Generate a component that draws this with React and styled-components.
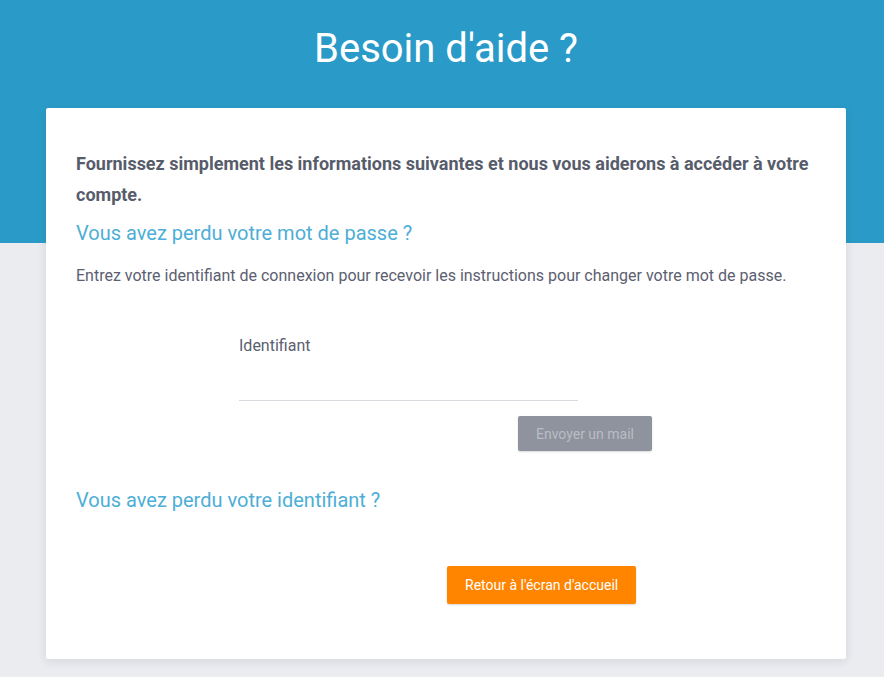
import React from "react";
import styled, { createGlobalStyle } from "styled-components";

const GlobalStyle = createGlobalStyle`
  html, body {
    margin: 0;
    padding: 0;
    background: #ebecf0;
    font-family: Roboto, "Liberation Sans", sans-serif;
  }
`;

const Page = styled.div`
  min-height: 677px;
  background: linear-gradient(to bottom, #2a9bc8 0, #2a9bc8 243px, #ebecf0 243px);
  padding: 0 0 18px 8px;
`;

const Title = styled.h1`
  margin: 0;
  padding-top: 24px;
  height: 108px;
  box-sizing: border-box;
  text-align: center;
  color: #ffffff;
  font-weight: 400;
  font-size: 40px;
  line-height: 50px;
`;

const Card = styled.div`
  width: 800px;
  margin: 0 auto;
  background: #ffffff;
  border-radius: 2px;
  box-shadow: 0 2px 10px rgba(40, 50, 70, 0.12);
  padding: 40px 30px 55px;
  box-sizing: border-box;
  color: #5b6070;
`;

const Intro = styled.p`
  margin: 0;
  font-size: 18px;
  font-weight: 700;
  line-height: 31px;
  color: #575c6b;
`;

const SectionTitle = styled.h2`
  margin: ${(p) => p.$top || 0}px 0 0;
  font-size: 20px;
  font-weight: 400;
  line-height: 30px;
  color: #4eaed6;
`;

const Text = styled.p`
  margin: 18px 0 0;
  font-size: 16px;
  line-height: 20px;
  color: #5b6070;
`;

const Form = styled.div`
  margin: 49px 0 0 163px;
  width: 413px;
  display: flex;
  flex-direction: column;
`;

const Label = styled.label`
  font-size: 16px;
  line-height: 22px;
  color: #5b6070;
`;

const Input = styled.input`
  width: 339px;
  height: 34px;
  margin-top: 9px;
  border: none;
  border-bottom: 1px solid #d9dbe1;
  outline: none;
  padding: 0;
  font: inherit;
  background: transparent;
`;

const Actions = styled.div`
  display: flex;
  justify-content: ${(p) => p.$justify || "flex-end"};
  margin-top: ${(p) => p.$top || 0}px;
  padding-left: ${(p) => p.$left || 0}px;
`;

const Button = styled.button`
  border: none;
  border-radius: 2px;
  font-family: Roboto, "Liberation Sans", sans-serif;
  font-size: 14px;
  padding: 0 18px;
  height: ${(p) => p.$height}px;
  background: ${(p) => (p.$primary ? "#ff8500" : "#8e939e")};
  color: ${(p) => (p.$primary ? "#ffffff" : "#b9bdc5")};
  box-shadow: 0 1px 2px rgba(0, 0, 0, 0.15);
`;

export default function App() {
  return (
    <>
      <GlobalStyle />
      <Page>
        <Title>Besoin d'aide ?</Title>
        <Card>
          <Intro>
            Fournissez simplement les informations suivantes et nous vous aiderons à accéder à votre
            compte.
          </Intro>
          <SectionTitle $top={8}>Vous avez perdu votre mot de passe ?</SectionTitle>
          <Text>
            Entrez votre identifiant de connexion pour recevoir les instructions pour changer votre mot de passe.
          </Text>
          <Form>
            <Label>Identifiant</Label>
            <Input type="text" />
            <Actions $top={15}>
              <Button $height={35}>Envoyer un mail</Button>
            </Actions>
          </Form>
          <SectionTitle $top={34}>Vous avez perdu votre identifiant ?</SectionTitle>
          <Actions $justify="flex-start" $left={371} $top={51}>
            <Button $primary $height={38}>Retour à l'écran d'accueil</Button>
          </Actions>
        </Card>
      </Page>
    </>
  );
}
